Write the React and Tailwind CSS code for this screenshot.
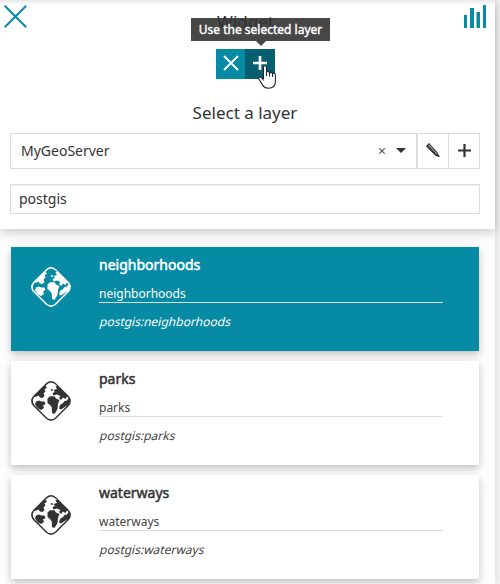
const layers = [
  { name: 'neighborhoods', selected: true },
  { name: 'parks' },
  { name: 'waterways' },
];

function Globe() {
  return (
    <svg viewBox="0 0 40 40" className="block size-10" fill="currentColor">
      <path
        fillRule="evenodd"
        d="M15 2.200Q20-2 25 2.200L37.800 15Q42 20 37.800 25L25 37.800Q20 42 15 37.800L2.200 25Q-2 20 2.200 15Z M16.500 3L14.500 5 16 6.500 13.500 8.500 14.500 10.500 12.500 12.500 13.500 15 11.500 17 9 16.500 7.500 14.500 5.500 15.500 3.300 16Q.3 20 3.300 24L16 36.700Q20 40 24 36.700L36.700 24 33 26.500 30 28.500 28 27.500 29 24 32 22 33.500 20 36 19.500 37.500 17 36 15.500 34.500 18 32 16.500 30 19 28 17 29.500 15 26 13.500 22.500 14.500 21.500 12 24 11 22.500 9 26 8 24.500 5.500 26 4.800 23.700 3Q20 0 16.500 3Z"
      />
      <path d="M4 23.500L5 20.500 8 19.500 10.500 20.500 13.500 20.500 14.500 23 12 24.500 13 27 10 29 7 27.500Z" />
      <path d="M16.500 17.500L19 15.300 23.500 15.300 25 17.500 28.500 19 27 23 26.500 28 23.500 33 21 32 20.800 26.500 19 24 16.500 22Z" />
      <path d="M20 8l2 .5-.5 1.500-1.800-.5z" />
    </svg>
  );
}

function LayerCard({ name, selected }) {
  return (
    <div
      className={`flex h-[104px] shrink-0 shadow-[0_3px_6px_rgba(0,0,0,0.13),0_4px_10px_rgba(0,0,0,0.12)] ${
        selected ? 'bg-[#078aa3] text-white' : 'bg-white text-[#333]'
      }`}
    >
      <div className="w-[88px] pt-5 pl-5"><Globe /></div>
      <div className="w-[344px] pt-2">
        <div className="h-5 text-[14px] leading-5 [-webkit-text-stroke:0.5px_currentColor]">{name}</div>
        <div className={`mt-2 h-5 border-b border-[#dddddd] text-[12px] leading-[22px] ${selected ? '' : 'text-[#444]'}`}>{name}</div>
        <div className={`mt-2.5 ml-px w-max -skew-x-[14deg] text-[12px] leading-[18px] ${selected ? '' : 'text-[#444]'}`}>postgis:{name}</div>
      </div>
    </div>
  );
}

export default function App() {
  return (
    <div className="relative h-[584px] w-[500px] overflow-hidden bg-[#f3f3f3] font-['Noto_Sans',sans-serif] text-[#333]">
      <div className="flex h-full w-[495px] flex-col bg-[#fdfdfd] shadow-[0_0_7px_rgba(0,0,0,0.12)]">
        <header className="relative z-10 h-[229px] shrink-0 bg-white shadow-[0_3px_10px_rgba(0,0,0,0.22)]">
          <div className="flex h-[49px] items-start justify-between bg-[linear-gradient(#e8e8e8,#ffffff_5px)] px-1 pt-[5px] text-[#078aa3]">
            <svg className="size-[23px]" viewBox="0 0 23 23" stroke="currentColor" strokeWidth="2"><path d="M.7.700l21.500 21.500M22.200.700L.700 22.200" /></svg>
            <h1 className="pt-[5px] text-[17px] leading-6 text-[#333]">Widget</h1>
            <svg className="mr-1 size-[23px]" viewBox="0 0 23 23" fill="currentColor"><path d="M0 10h3v13H0zM6 3h4v20H6zM12.500 7h3.500v16h-3.500zM19 0h3v23h-3z" /></svg>
          </div>
          <div className="flex justify-center pr-[4px]">
            <button className="flex h-[30px] w-[29px] items-center justify-center bg-[#078aa3]">
              <svg className="-mt-0.5 size-4" viewBox="0 0 16 16" stroke="white" strokeWidth="1.800"><path d="M1 1l14 14M15 1L1 15" /></svg>
            </button>
            <button className="flex size-[30px] items-center justify-center bg-[#055f71]">
              <svg className="-mt-0.5 mr-px size-4" viewBox="0 0 16 16" stroke="white" strokeWidth="2.600"><path d="M8 1v14M1 8h14" /></svg>
            </button>
          </div>
          <h2 className="mt-[22px] h-6 pr-[5px] text-center text-[17px] leading-6">Select a layer</h2>
          <div className="mt-2 mr-[15px] ml-2.5 flex h-9 border border-[#dddddd] text-[14px]">
            <div className="flex flex-1 items-center pb-px pl-2.5">
              <span className="flex-1">MyGeoServer</span>
              <svg className="mr-[11px] size-1.5" viewBox="0 0 6 6" stroke="#555" strokeWidth="1.200"><path d="M.3.300l5.400 5.400M5.700.300L.3 5.700" /></svg>
              <svg className="mr-2.5 h-[5px] w-2.5" viewBox="0 0 10 5" fill="#333"><path d="M0 0h10L5 5z" /></svg>
            </div>
            <div className="flex w-8 items-center justify-center border-l-2 border-[#dddddd]">
              <svg className="-mt-0.5 size-3.5" viewBox="0 0 14 14" fill="none" stroke="#333"><path d="M.8 3.200L3 .8l7.500 8.200 2.300 4.200-4.400-2.200zM1.700 2.200l8 8.500" strokeWidth="1.200" /><path d="M10.500 11l2.500 2.300-3.500-1z" fill="#333" /></svg>
            </div>
            <div className="flex w-[31px] items-center justify-center border-l border-[#dddddd]">
              <svg className="-mt-px size-[13px]" viewBox="0 0 13 13" stroke="#333" strokeWidth="2.200"><path d="M6.500 0v13M0 6.500h13" /></svg>
            </div>
          </div>
          <div className="mt-[15px] mr-[15px] ml-2.5 flex h-[30px] items-center border border-[#dddddd] pb-0.5 pl-2 text-[14px] shadow-[inset_0_1px_1px_rgba(0,0,0,0.07)]">postgis</div>
        </header>
        <main className="flex flex-col gap-2.5 pt-[18px] pr-4 pl-[11px]">
          {layers.map((layer) => <LayerCard key={layer.name} {...layer} />)}
        </main>
      </div>
      <div className="absolute top-[18px] left-[191px] z-20 flex h-[23px] w-[139px] items-center justify-center bg-[#333]/90 text-[12px] whitespace-nowrap text-white [-webkit-text-stroke:0.4px_currentColor]">
        Use the selected layer
        <svg className="absolute top-[23px] left-[65px] h-[5px] w-2.5" viewBox="0 0 10 5" fill="#484848"><path d="M0 0h10L5 5z" /></svg>
      </div>
      <svg className="absolute top-[65px] left-[258px] z-20 h-6 w-[18px]" viewBox="0 0 18 24" fill="white" stroke="#222233" strokeWidth="1.100" strokeLinejoin="round">
        <path d="M5.500 14V2.500Q5.500.7 7 .7T8.500 2.500V7Q11 5.500 11.500 8Q14 6.500 14.500 8.500Q17.400 7.500 17.400 10.500v6q0 6.500-7 6.800Q5.500 23 4 19L.9 14Q.3 12 2 12T5.500 15.500M8.500 7v4M11.500 8v3.500M14.500 8.500v3.500" />
      </svg>
    </div>
  );
}
